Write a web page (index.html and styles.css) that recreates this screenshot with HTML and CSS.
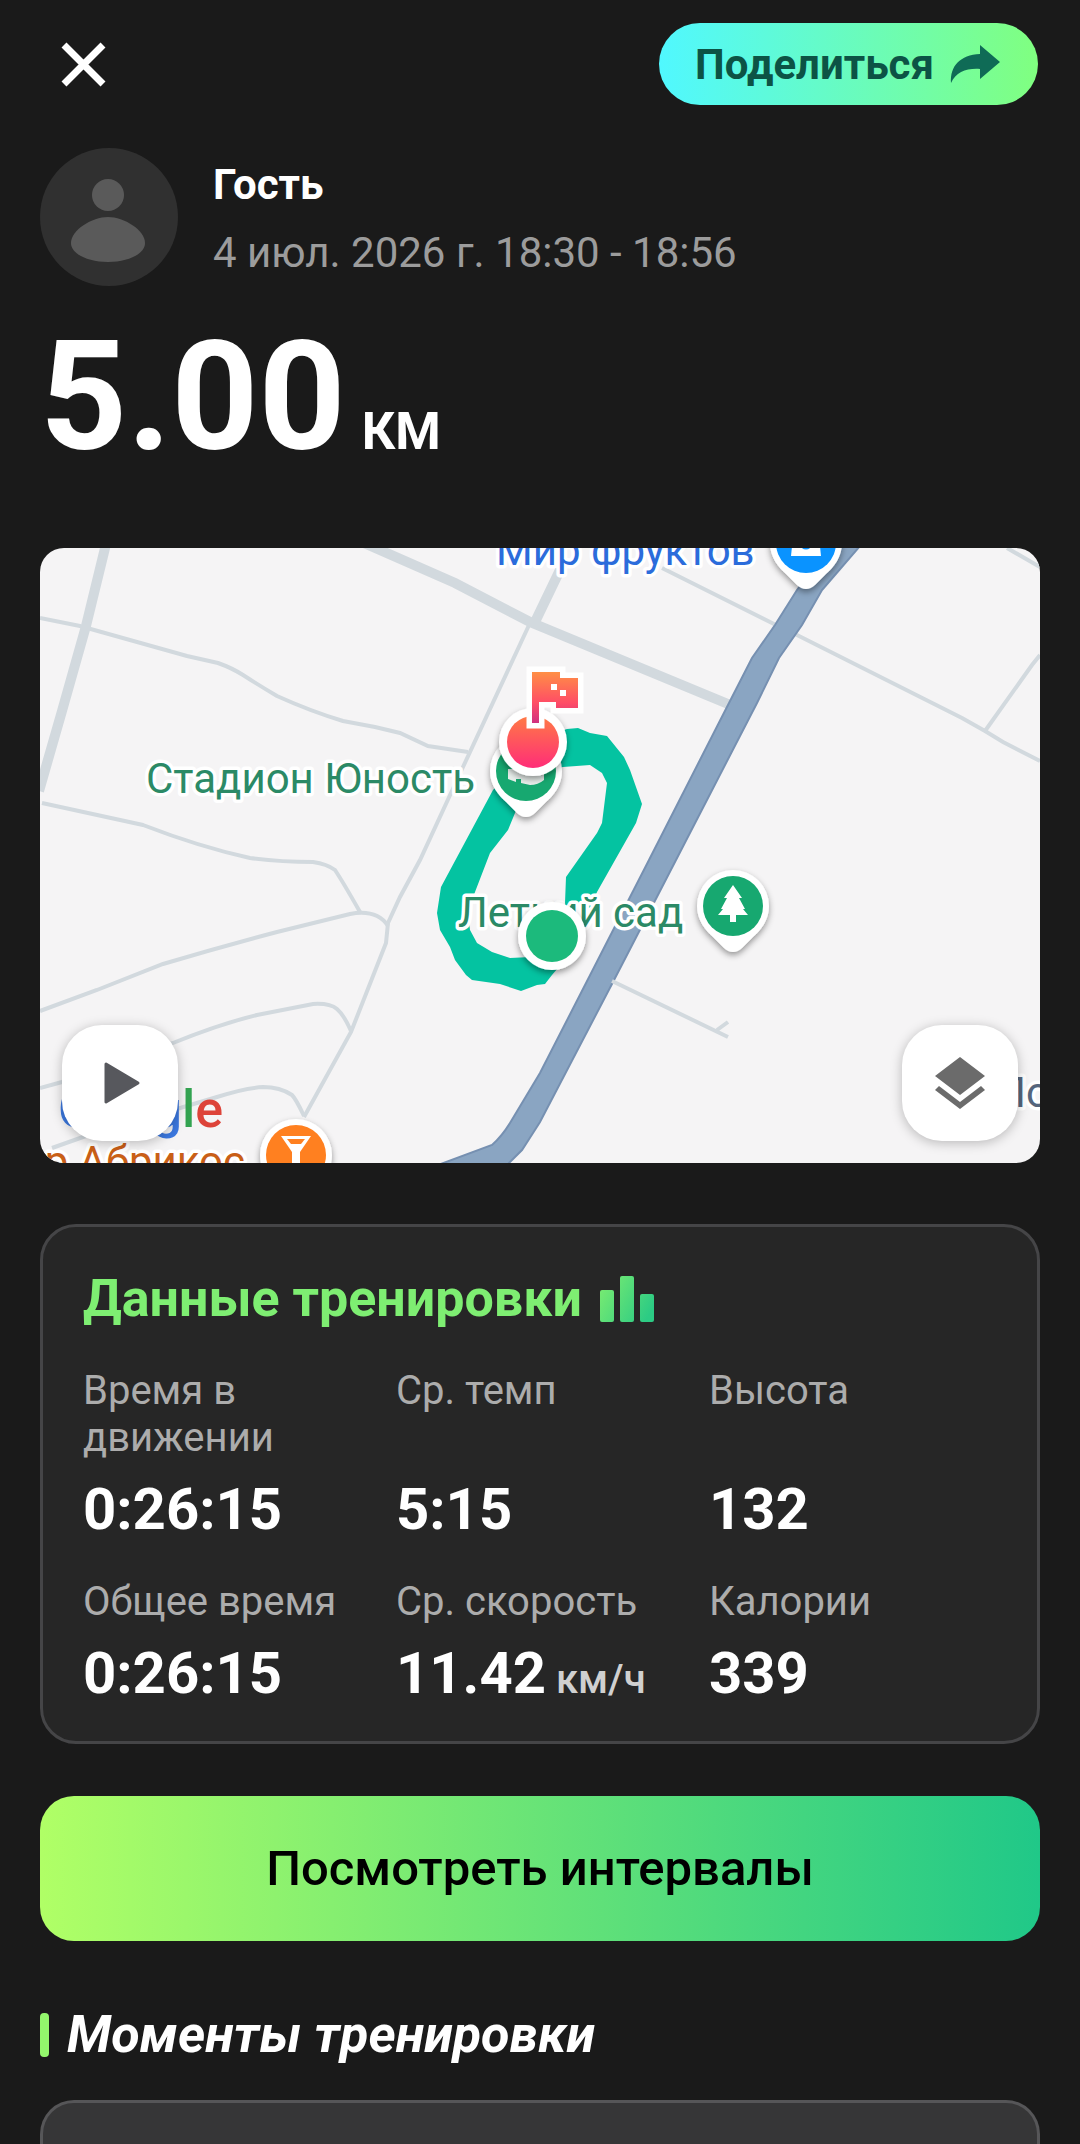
FILE: index.html
```
<!DOCTYPE html>
<html lang="ru">
  <head>
    <meta charset="UTF-8" />
    <meta name="viewport" content="width=device-width, initial-scale=1.0" />
    <title>Тренировка</title>
    <link rel="stylesheet" href="styles.css">
  </head>
  <body>
    <header class="topbar">
      <button class="close" aria-label="Закрыть">
        <svg viewBox="0 0 45 45"><path d="M3 3L42 42M42 3L3 42" fill="none" stroke="#fff" stroke-width="7" /></svg>
      </button>
      <button class="share">
        Поделиться
        <svg viewBox="0 0 50 38"><path d="M30 0L50 17L30 34V24C17 23 6 27 1 38C0 21 10 10 30 9Z" fill="#0f6b56" /></svg>
      </button>
    </header>

    <main>
      <section class="profile">
        <svg class="avatar" viewBox="0 0 138 138">
          <circle cx="69" cy="69" r="69" fill="#303030" />
          <circle cx="68" cy="47" r="16" fill="#5a5a5a" />
          <path d="M68 69C84 69 105 82 105 95C105 106 88 114 68 114C48 114 31 106 31 95C31 82 52 69 68 69Z" fill="#5a5a5a" />
        </svg>
        <div class="profile-text">
          <h1 class="name">Гость</h1>
          <p class="date">4 июл. 2026 г. 18:30 - 18:56</p>
        </div>
      </section>

      <p class="distance">5.00<span>КМ</span></p>

      <section class="map">
        <svg class="map-view" viewBox="0 0 1000 615" preserveAspectRatio="xMidYMid slice">
          <defs>
            <linearGradient id="finish" x1="0" y1="0" x2="0" y2="1">
              <stop offset="0" stop-color="#ff7a45" />
              <stop offset="1" stop-color="#ff2d78" />
            </linearGradient>
            <linearGradient id="flag" x1="0" y1="0" x2="0" y2="1">
              <stop offset="0" stop-color="#ff8f45" />
              <stop offset="0.6" stop-color="#ff4d66" />
              <stop offset="1" stop-color="#d03080" />
            </linearGradient>
            <filter id="shadow" x="-30%" y="-30%" width="160%" height="160%">
              <feDropShadow dx="0" dy="3" stdDeviation="3" flood-opacity="0.4" />
            </filter>
            <path id="pin" d="M-36 0A36 36 0 1 1 36 0C36 14 28 24 20 31L9 42Q0 50 -9 42L-20 31C-28 24 -36 14 -36 0Z" />
          </defs>

          <!-- streets -->
          <g class="street">
            <path d="M0 70L40 78L147 108L178 115Q192 120 203 127Q220 138 237 148Q270 163 303 173L335 179L360 185L388 198L428 204" />
            <path d="M2 255L103 277Q160 299 210 310Q240 314 273 314Q287 316 295 322Q303 334 320 364" />
            <path d="M490 75L423 219L380 312L360 349L348 375L346 395L311 484L264 569" />
            <path d="M0 463L57 442L123 416Q180 399 237 384L310 366Q337 361 348 378" />
            <path d="M0 540L22 534L133 495Q180 476 217 467L273 456Q290 455 297 461Q304 467 311 483" />
            <path d="M12 600L43 589L177 549Q205 540 223 539Q240 539 252 547Q256 551 264 568" />
            <path d="M622 20L736 77M753 85L922 170L945 183L963 194L1000 213M1000 107L992 117L945 183M967 0L1000 19" />
          </g>
          <g class="street wide">
            <path d="M66 -4L46 78L22 163L-1 243" />
            <path d="M324 -5L415 35L490 74L688 156M495 74L520 22" />
          </g>
          <path class="highway" d="M790 -2L757 42L735 77L712 110L689 155L609 312L500 525L470 575Q462 588 452 597L398 617H467L482 602L493 585L500 574L573 434L636 312L717 155L739 110L762 77L782 42L820 -2Z" />
          <path class="street" d="M572 433L688 489M677 482L688 474" />

          <!-- route -->
          <path fill="#04c3a1" fill-rule="evenodd" d="M500 190L527 181L538 180L550 185L567 188L584 209L590 222L602 256L596 275L557 344L535 400L512 427L505 436L497 437L481 443L460 436L432 432L426 427L415 412L410 399L400 382L397 365L401 339L453 242ZM475 265L468 282L450 305L435 344L428 365L430 382L437 395L452 404L470 410L512 408L525 355L526 329L557 285L562 275L567 235L562 225L550 217L523 219L490 225Z" />

          <!-- places -->
          <g class="place">
            <text x="106" y="245" fill="#2b8a66">Стадион Юность</text>
            <text x="418" y="379" fill="#2b8a66">Летний сад</text>
            <text x="456" y="17" fill="#2b6cdb">Мир фруктов</text>
            <text x="205" y="628" text-anchor="end" fill="#c95f17">р Абрикос</text>
            <text x="956" y="559" fill="#55657c">По</text>
          </g>
          <g transform="translate(486 223)">
            <use href="#pin" fill="#fff" filter="url(#shadow)" />
            <circle r="30" fill="#17a870" />
            <path d="M-18 -2H18V9Q12 14 4 14L-5 12V8H-10V11L-18 8Z" fill="#e8eeeb" />
          </g>
          <g transform="translate(766 -5)">
            <use href="#pin" fill="#fff" filter="url(#shadow)" />
            <circle r="30" fill="#0a93ff" />
            <path d="M-13 -6H13L15 13H-15Z" fill="#fff" />
            <path d="M-6 1Q0 9 6 1" fill="none" stroke="#0a93ff" stroke-width="3" />
          </g>
          <g transform="translate(693 358)">
            <use href="#pin" fill="#fff" filter="url(#shadow)" />
            <circle r="30" fill="#17a870" />
            <path d="M0 -21L9 -8H6L12 3H10L15 9H3V16H-3V9H-15L-10 3H-12L-6 -8H-9Z" fill="#fff" />
          </g>
          <g transform="translate(256 607)">
            <use href="#pin" fill="#fff" filter="url(#shadow)" />
            <circle r="30" fill="#ff8020" />
            <path d="M-15 -19H15L4 -3V14H-4V-3Z" fill="#fff" />
            <path d="M-9 -16H9L5 -11H-5Z" fill="#ff8020" />
          </g>
          <text class="google" x="183" y="579" text-anchor="end"><tspan fill="#3b78e0">G</tspan><tspan fill="#dd4339">o</tspan><tspan fill="#f2b50c">o</tspan><tspan fill="#3b78e0">g</tspan><tspan fill="#33a351">l</tspan><tspan fill="#dd4339">e</tspan></text>

          <!-- start and finish -->
          <circle cx="512" cy="388" r="34" fill="#fff" filter="url(#shadow)" />
          <circle cx="512" cy="388" r="26" fill="#1cba7c" />
          <circle cx="493" cy="194" r="34" fill="#fff" filter="url(#shadow)" />
          <circle cx="493" cy="194" r="26" fill="url(#finish)" />
          <path d="M492 124H520V130H538V160H516V154H499V175H492Z" fill="#fff" stroke="#fff" stroke-width="11" />
          <path d="M492 124H520V130H538V160H516V154H499V175H492Z" fill="url(#flag)" />
          <path d="M511 136H517V142H511ZM520 142H526V148H520Z" fill="#fff" />
        </svg>
        <button class="map-btn play" aria-label="Воспроизвести">
          <svg viewBox="0 0 50 52"><path d="M9 7L41 26L9 45Z" fill="#57585d" stroke="#57585d" stroke-width="3" stroke-linejoin="round" /></svg>
        </button>
        <button class="map-btn layers" aria-label="Слои">
          <svg viewBox="0 0 50 52"><path d="M25 0L50 19L25 38L0 19ZM4 29L25 45L46 29L50 33L25 52L0 33Z" fill="#6b6b6b" /></svg>
        </button>
      </section>

      <section class="card">
        <h2 class="card-title">
          Данные тренировки
          <svg viewBox="0 0 54 46">
            <defs>
              <linearGradient id="bars" x1="0" y1="0" x2="54" y2="30" gradientUnits="userSpaceOnUse">
                <stop offset="0" stop-color="#7fee70" />
                <stop offset="1" stop-color="#2ccb84" />
              </linearGradient>
            </defs>
            <g fill="url(#bars)">
              <rect x="0" y="14" width="14" height="32" rx="2" />
              <rect x="20" y="0" width="14" height="46" rx="2" />
              <rect x="40" y="18" width="14" height="28" rx="2" />
            </g>
          </svg>
        </h2>
        <dl class="stats">
          <div><dt>Время в движении</dt><dd>0:26:15</dd></div>
          <div><dt>Ср. темп</dt><dd>5:15</dd></div>
          <div><dt>Высота</dt><dd>132</dd></div>
          <div><dt>Общее время</dt><dd>0:26:15</dd></div>
          <div><dt>Ср. скорость</dt><dd>11.42<span>км/ч</span></dd></div>
          <div><dt>Калории</dt><dd>339</dd></div>
        </dl>
      </section>

      <button class="intervals">Посмотреть интервалы</button>

      <h2 class="section-title">Моменты тренировки</h2>
      <section class="moments"></section>
    </main>
  </body>
</html>
```
FILE: styles.css
```
* {
  margin: 0;
  padding: 0;
  box-sizing: border-box;
}

body {
  height: 100vh;
  display: flex;
  flex-direction: column;
  overflow: hidden;
  background: #1a1a1a;
  color: #fff;
  font-family: Roboto, "Noto Sans", sans-serif;
}

button {
  border: none;
  font-family: inherit;
  cursor: pointer;
}

svg {
  display: block;
  flex-shrink: 0;
}

.topbar {
  display: flex;
  justify-content: space-between;
  align-items: center;
  padding: 23px 42px 0 61px;
}

.close {
  background: none;
}

.close svg {
  width: 45px;
  height: 45px;
}

.share {
  display: flex;
  align-items: center;
  gap: 16px;
  height: 82px;
  padding: 0 38px 0 36px;
  border-radius: 41px;
  background: linear-gradient(90deg, #50f8ff, #80ff80);
  color: #0c5345;
  font-size: 42px;
  font-weight: 700;
}

.share svg {
  width: 50px;
  height: 38px;
}

main {
  flex: 1;
  display: flex;
  flex-direction: column;
  padding: 42px 40px 0;
}

.profile {
  display: flex;
  align-items: center;
  gap: 35px;
}

.avatar {
  width: 138px;
  height: 138px;
}

.profile-text {
  padding-top: 4px;
}

.name,
.date {
  font-size: 42px;
  line-height: 68px;
}

.name {
  font-weight: 700;
}

.date {
  color: #9c9c9c;
}

.distance {
  margin-top: 20px;
  font-size: 152px;
  line-height: 180px;
  font-weight: 700;
}

.distance span {
  margin-left: 16px;
  font-size: 52px;
  line-height: 1;
}

.map {
  position: relative;
  margin-top: 61px;
  aspect-ratio: 1000 / 615;
  border-radius: 24px;
  overflow: hidden;
  background: #f5f4f5;
}

.map-view {
  width: 100%;
  height: 100%;
}

.street {
  fill: none;
  stroke: #d2d9de;
  stroke-width: 4;
}

.wide {
  stroke-width: 10;
}

.highway {
  fill: #8aa5c2;
  stroke: #7690b1;
  stroke-width: 2;
}

.place {
  font-size: 42px;
  stroke: #fff;
  stroke-width: 7;
  stroke-linejoin: round;
  paint-order: stroke;
}

.google {
  font-size: 52px;
  font-weight: 500;
}

.map-btn {
  position: absolute;
  bottom: 22px;
  display: flex;
  justify-content: center;
  align-items: center;
  width: 116px;
  height: 116px;
  border-radius: 40px;
  background: #fff;
  box-shadow: 0 2px 12px rgba(0, 0, 0, 0.25);
}

.map-btn svg {
  width: 50px;
  height: 52px;
}

.play {
  left: 22px;
}

.play svg {
  margin-left: 4px;
}

.layers {
  right: 22px;
}

.card {
  margin-top: 61px;
  padding: 42px 15px 34px 40px;
  border: 3px solid #454547;
  border-radius: 36px;
  background: #262626;
}

.card-title {
  display: flex;
  align-items: center;
  gap: 18px;
  color: #7eee72;
  font-size: 52px;
  line-height: 60px;
}

.card-title svg {
  width: 54px;
  height: 46px;
}

.stats {
  display: grid;
  grid-template-columns: repeat(3, 1fr);
  row-gap: 35px;
  margin-top: 38px;
}

.stats div {
  display: flex;
  flex-direction: column;
  justify-content: space-between;
  gap: 14px;
}

.stats dt {
  color: #acacac;
  font-size: 40px;
  line-height: 47px;
}

.stats dd {
  font-size: 58px;
  line-height: 68px;
  font-weight: 700;
}

.stats span {
  margin-left: 10px;
  color: #d0d0d0;
  font-size: 40px;
  line-height: 1;
  font-weight: 500;
}

.intervals {
  flex-shrink: 0;
  height: 145px;
  margin-top: 52px;
  border-radius: 34px;
  background: linear-gradient(90deg, #b0ff66, #20c888);
  color: #000;
  font-size: 49px;
  font-weight: 500;
}

.section-title {
  display: flex;
  align-items: center;
  gap: 18px;
  margin-top: 64px;
  font-size: 52px;
  line-height: 60px;
  font-style: italic;
}

.section-title::before {
  content: "";
  width: 9px;
  height: 44px;
  border-radius: 4px;
  background: #93f76c;
}

.moments {
  flex: 1;
  margin-top: 35px;
  border: 3px solid #565658;
  border-bottom: none;
  border-radius: 34px 34px 0 0;
  background: #363637;
}
```
